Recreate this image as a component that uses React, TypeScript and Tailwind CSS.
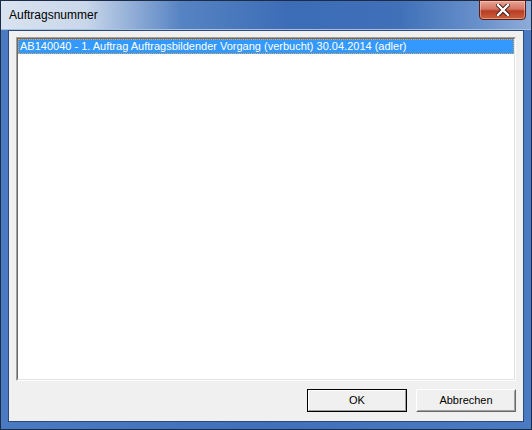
const items = [
  "AB140040 - 1. Auftrag Auftragsbildender Vorgang (verbucht) 30.04.2014 (adler)",
];

const CloseGlyph = () => (
  <svg width="14" height="12" viewBox="0 0 14 12">
    <path
      d="M2 1 L12 11 M12 1 L2 11"
      stroke="#3a1a16"
      strokeWidth="4.2"
      strokeLinecap="square"
      fill="none"
    />
    <path
      d="M2 1 L12 11 M12 1 L2 11"
      stroke="#ffffff"
      strokeWidth="2.4"
      strokeLinecap="square"
      fill="none"
    />
  </svg>
);

const App = () => {
  return (
    <div className="w-[532px] h-[430px] flex flex-col bg-[linear-gradient(90deg,#4a7bc2_0%,#3f70b9_50%,#4a7bc2_100%)] border border-[#1c2c46] font-['Liberation_Sans',Arial,sans-serif] text-[11px] text-black">
      {/* title bar */}
      <div className="h-[29px] flex items-start justify-between bg-[linear-gradient(90deg,#d9e3f0_0%,#c9d7ea_16%,#5683c3_34%,#3b6cb6_55%,#3f70b8_75%,#6890cb_90%,#8eabd8_100%)] border-b border-[#a9c0e0]">
        <span className="pl-[8px] pt-[6px] text-[12px] leading-[16px]">Auftragsnummer</span>
        <div className="w-[47px] h-[20px] mr-[5px] mt-[-1px] flex items-center justify-center rounded-b-[4px] border border-[#5a1e14] bg-[linear-gradient(180deg,#e8a596_0%,#d47462_45%,#b83d24_55%,#c8603c_100%)] shadow-[inset_0_0_0_1px_rgba(255,220,210,0.45)]">
          <CloseGlyph />
        </div>
      </div>

      {/* client area */}
      <div className="flex-1 mx-[7px] mb-[7px] flex flex-col bg-[#f0f0f0] border border-[#2c4a78] px-[7px] pt-[6px]">
        <div className="h-[344px] border border-t-[#a0a0a0] border-l-[#a0a0a0] border-r-white border-b-white">
          <div className="h-full bg-white border border-t-[#696969] border-l-[#696969] border-r-[#e3e3e3] border-b-[#e3e3e3]">
            {items.map((it) => (
              <div
                key={it}
                className="h-[15px] bg-[#3399ff] text-white leading-[13px] pl-[1px] border border-dotted border-[#e8a050]"
              >
                {it}
              </div>
            ))}
          </div>
        </div>

        <div className="mt-[8px] flex justify-end gap-[9px]">
          <button className="w-[100px] h-[23px] border border-black bg-[#f0f0f0] leading-none">
            <div className="h-full flex items-center justify-center border border-t-white border-l-white border-r-[#a0a0a0] border-b-[#a0a0a0]">
              OK
            </div>
          </button>
          <button className="w-[100px] h-[23px] border border-t-white border-l-white border-r-[#696969] border-b-[#696969] bg-[#f0f0f0] leading-none">
            <div className="h-full flex items-center justify-center border border-t-[#f0f0f0] border-l-[#f0f0f0] border-r-[#a0a0a0] border-b-[#a0a0a0]">
              Abbrechen
            </div>
          </button>
        </div>
      </div>
    </div>
  );
};

export default App;
